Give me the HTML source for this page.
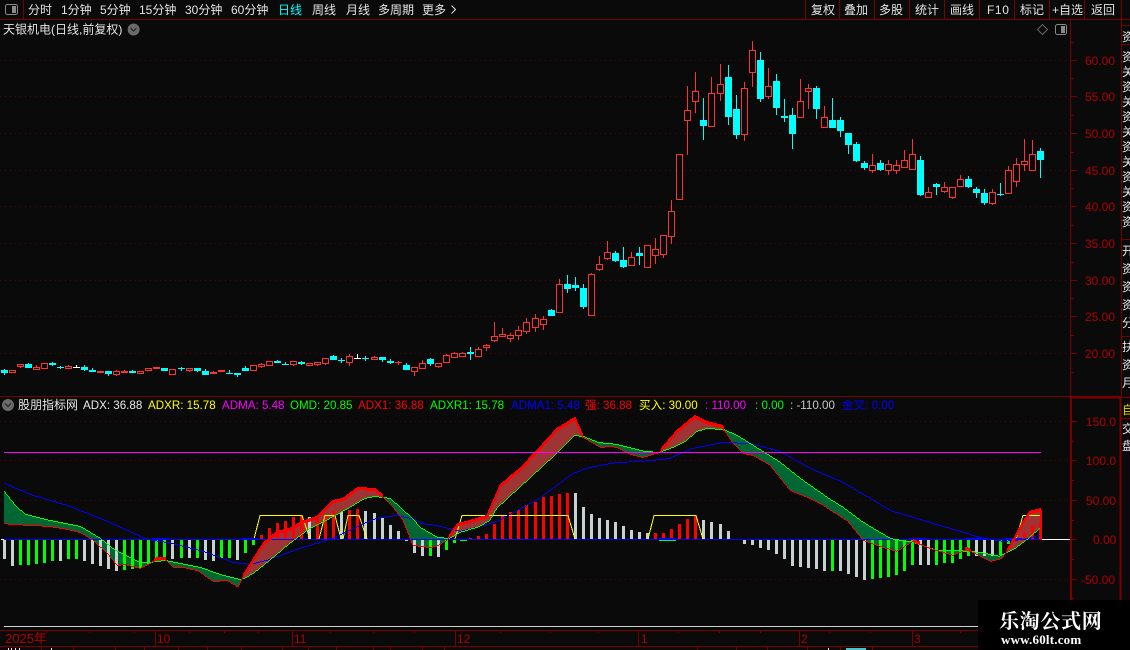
<!DOCTYPE html>
<html><head><meta charset="utf-8"><style>
html,body{margin:0;padding:0;background:#0a0a0a;width:1130px;height:650px;overflow:hidden}
svg{display:block;position:absolute;left:0;top:0}
text{font-family:"Liberation Sans","WenQuanYi Zen Hei","Noto Sans CJK SC",sans-serif;font-size:12px;white-space:pre}
.t text{fill:#e4e4e4}
.ax text{fill:#b00000;letter-spacing:0}
.l text{font-size:11.6px}
</style></head><body>
<svg id="s" width="1130" height="650" viewBox="0 0 1130 650" xmlns="http://www.w3.org/2000/svg">
<rect width="1130" height="650" fill="#0a0a0a"/>
<g id="grid" stroke="#640000" stroke-width="1" stroke-dasharray="1 4" shape-rendering="crispEdges">
<path d="M0 60.5H1070M0 96.5H1070M0 133.5H1070M0 170.5H1070M0 206.5H1070M0 243.5H1070M0 280.5H1070M0 316.5H1070M0 353.5H1070M0 421.5H1070M0 460.5H1070M0 500.5H1070M0 579.5H1070"/>
</g>
<g id="dyn"></g>
<g fill="none" stroke="#7a0000" shape-rendering="crispEdges">
<path d="M0 19.5H1130M23.5 0V19M805.5 0V19M839.5 0V19M874.5 0V19M909.5 0V19M944.5 0V19M979.5 0V19M1014.5 0V19M1049.5 0V19M1084.5 0V19M1121.5 0V396M1070.5 19V396M0 396.5H1121M0 630.5H1121M0 646.5H1121"/>
<path d="M1071 60.5h6M1071 96.5h6M1071 133.5h6M1071 170.5h6M1071 206.5h6M1071 243.5h6M1071 280.5h6M1071 316.5h6M1071 353.5h6M1071 78.5h3M1071 115.5h3M1071 152.5h3M1071 188.5h3M1071 225.5h3M1071 262.5h3M1071 298.5h3M1071 335.5h3M1071 372.5h3M1071 42.5h3"/>
<path d="M1071 421.5h6M1071 460.5h6M1071 500.5h6M1071 539.5h6M1071 579.5h6M1071 441.5h3M1071 480.5h3M1071 520.5h3M1071 559.5h3M1071 598.5h3"/>
<path stroke-width="2" d="M1071 397.5H1120.5V630M1071 397V630"/>
<path d="M155.5 630V646M292.5 630V646M455.5 630V646M638.5 630V646M799.5 630V646M912.5 630V646"/>
<path d="M41.5 646v4M73.5 646v4M115.5 646v4M144.5 646v4M178.5 646v4M207.5 646v4M241.5 646v4M282.5 646v4M308.5 646v4M336.5 646v4M373.5 646v4M390.5 646v4M422.5 646v4M444.5 646v4M697.5 646v4M736.5 646v4M767.5 646v4M807.5 646v4M840.5 646v4M872.5 646v4"/>
<path d="M1121 25.5h9M1121 44.5h9M1121 239.5h9M1121 336.5h9M1121 418.5h9M1121 397.5h9"/>
<path d="M46.5 631v2M89.5 631v2M134.5 631v2M189.5 631v2M224.5 631v2M258.5 631v2M330.5 631v2M373.5 631v2M414.5 631v2M500.5 631v2M550.5 631v2M598.5 631v2M678.5 631v2M719.5 631v2M760.5 631v2M829.5 631v2M870.5 631v2M960.5 631v2M1010.5 631v2"/>
</g>
<rect x="4" y="626" width="1067" height="1" fill="#d0d0d0"/>

<!-- top bar -->
<rect x="5.5" y="4.5" width="12" height="10" rx="2" fill="none" stroke="#8a8a8a"/>
<rect x="12" y="6" width="4" height="7" fill="#8a8a8a"/>
<g class="t">
<text x="28" y="14">分时</text><text x="61" y="14">1分钟</text><text x="100" y="14">5分钟</text><text x="139" y="14">15分钟</text><text x="185" y="14">30分钟</text><text x="231" y="14">60分钟</text>
<text x="278" y="14" style="fill:#00ffff">日线</text><text x="312" y="14">周线</text><text x="346" y="14">月线</text><text x="378" y="14">多周期</text><text x="422" y="14">更多</text>
<text x="811" y="14">复权</text><text x="844" y="14">叠加</text><text x="879" y="14">多股</text><text x="915" y="14">统计</text><text x="950" y="14">画线</text><text x="987" y="14" style="letter-spacing:.6px">F10</text><text x="1020" y="14">标记</text><text x="1052" y="14">+自选</text><text x="1091" y="14">返回</text>
<text x="3" y="33.5">天银机电(日线,前复权)</text>
<text x="18" y="409">股朋指标网</text>
</g>
<path d="M451.5 5.5l4 4-4 4" fill="none" stroke="#e4e4e4"/>
<circle cx="133.6" cy="29.5" r="6" fill="#6a6a6a"/><path d="M130.5 28l3 3 3-3" fill="none" stroke="#222" stroke-width="1.2"/>
<circle cx="8" cy="405" r="6" fill="#6a6a6a"/><path d="M5 403.5l3 3 3-3" fill="none" stroke="#222" stroke-width="1.2"/>
<path d="M1042.5 24.5l5 5-5 5-5-5z" fill="none" stroke="#666"/>
<rect x="1055.5" y="24.5" width="11" height="10" rx="2" fill="none" stroke="#8a8a8a"/><rect x="1061" y="26" width="4" height="7" fill="#8a8a8a"/>

<!-- indicator header -->
<g class="l">
<text x="83" y="409" fill="#e8e8e8">ADX: 36.88</text>
<text x="148" y="409" fill="#ffff00">ADXR: 15.78</text>
<text x="222" y="409" fill="#ff00ff">ADMA: 5.48</text>
<text x="290" y="409" fill="#00ff00">OMD: 20.85</text>
<text x="358" y="409" fill="#ff0000">ADX1: 36.88</text>
<text x="430" y="409" fill="#00ff00">ADXR1: 15.78</text>
<text x="511" y="409" fill="#0000ff">ADMA1: 5.48</text>
<text x="585" y="409" fill="#ff0000">强: 36.88</text>
<text x="639" y="409" fill="#ffff00">买入: 30.00</text>
<text x="705" y="409" fill="#ff00ff">: 110.00</text>
<text x="755" y="409" fill="#00ff00">: 0.00</text>
<text x="790" y="409" fill="#c8c8c8">: -110.00</text>
<text x="842" y="409" fill="#0000ff">金叉: 0.00</text>
</g>

<!-- axis labels -->
<g class="ax">
<text x="1085" y="65">60.00</text><text x="1085" y="101">55.00</text><text x="1085" y="138">50.00</text><text x="1085" y="175">45.00</text><text x="1085" y="211">40.00</text><text x="1085" y="248">35.00</text><text x="1085" y="285">30.00</text><text x="1085" y="321">25.00</text><text x="1085" y="358">20.00</text>
<text x="1086" y="426">150.0</text><text x="1086" y="465">100.0</text><text x="1086" y="505">50.00</text><text x="1093" y="544">0.00</text><text x="1081" y="584">-50.00</text>
<text x="5" y="643" style="font-size:13px">2025年</text><text x="157" y="643">10</text><text x="294" y="643">11</text><text x="457" y="643">12</text><text x="641" y="643">1</text><text x="801" y="643">2</text><text x="914" y="643">3</text>
</g>

<!-- right sidebar clipped characters -->
<clipPath id="c"><rect x="1122" y="20" width="8" height="630"/></clipPath>
<g clip-path="url(#c)" style="font-size:13px">
<text x="1122" y="41" fill="#e8e8e8">资</text><text x="1122" y="61" fill="#e8e8e8">资</text><text x="1122" y="76" fill="#e8e8e8">关</text><text x="1122" y="91" fill="#e8e8e8">资</text><text x="1122" y="106" fill="#e8e8e8">关</text><text x="1122" y="121" fill="#e8e8e8">资</text><text x="1122" y="136" fill="#e8e8e8">关</text><text x="1122" y="151" fill="#e8e8e8">资</text><text x="1122" y="166" fill="#e8e8e8">关</text><text x="1122" y="181" fill="#e8e8e8">资</text><text x="1122" y="196" fill="#e8e8e8">关</text><text x="1122" y="211" fill="#e8e8e8">资</text><text x="1122" y="226" fill="#e8e8e8">资</text>
<text x="1122" y="255" fill="#e8e8e8">开</text><text x="1122" y="273" fill="#e8e8e8">资</text><text x="1122" y="291" fill="#e8e8e8">资</text><text x="1122" y="309" fill="#e8e8e8">资</text><text x="1122" y="327" fill="#e8e8e8">分</text>
<text x="1122" y="351" fill="#e8e8e8">扶</text><text x="1122" y="369" fill="#e8e8e8">资</text><text x="1122" y="387" fill="#e8e8e8">月</text>
<text x="1122" y="414" fill="#d8d800">自</text>
<text x="1122" y="433" fill="#e8e8e8">交</text><text x="1122" y="450" fill="#e8e8e8">盘</text>
</g>
<g fill="#e8e8e8" shape-rendering="crispEdges"><rect x="8" y="648" width="1" height="2"/><rect x="11" y="648" width="1" height="2"/><rect x="15" y="648" width="1" height="2"/><rect x="19" y="648" width="1" height="2"/><rect x="51" y="648" width="1" height="2"/><rect x="828" y="648" width="1" height="2"/></g>
<rect x="846" y="648" width="20" height="2" fill="#40c8c8"/>

<!-- watermark -->
<rect x="978" y="600" width="152" height="50" fill="#000"/>
<text x="999" y="628" fill="#fff" style="font-family:'Noto Serif CJK SC',serif;font-size:20px;font-weight:bold;letter-spacing:.7px">乐淘公式网</text>
<text x="1001" y="644" fill="#fff" style="font-family:'Liberation Serif',serif;font-size:13px;font-weight:bold;letter-spacing:.2px">www.60lt.com</text>
</svg>
<script>
(function(){
var X=function(k){return 4+8*k+(k<22?0:k<46?1:k<66?2:k<89?3:4)};
var C=[[369,370,373,375,'c'],[370,370,373,373,'r'],[364,364,367,368,'r'],[363,364,368,368,'c'],[365,367,370,370,'r'],[363,363,369,369,'r'],[362,363,365,366,'c'],[366,367,368,369,'c'],[365,366,369,369,'r'],[365,367,368,368,'w'],[365,367,370,371,'c'],[368,370,372,372,'c'],[371,371,373,373,'R'],[371,371,374,376,'c'],[370,371,375,376,'r'],[370,371,373,373,'R'],[370,371,373,373,'c'],[371,371,374,374,'r'],[368,368,371,371,'r'],[367,367,369,369,'R'],[368,368,371,371,'c'],[369,369,375,375,'r'],[367,368,369,371,'c'],[368,368,371,372,'r'],[368,368,371,372,'c'],[369,371,375,375,'c'],[371,372,374,374,'R'],[370,370,372,372,'R'],[370,373,374,374,'c'],[373,373,375,377,'c'],[366,368,371,371,'c'],
[365,365,371,371,'r'],[363,364,367,368,'r'],[361,361,366,366,'r'],[360,361,363,363,'c'],[362,364,365,365,'c'],[361,361,365,366,'r'],[361,362,364,365,'c'],[363,363,366,366,'r'],[362,362,365,366,'r'],[358,358,364,365,'r'],[355,356,360,360,'c'],[358,360,361,363,'c'],[354,356,363,366,'r'],[354,358,359,359,'w'],[356,358,359,361,'c'],[356,357,360,360,'r'],[357,357,360,362,'c'],[359,361,363,364,'c'],[361,362,363,365,'R'],[363,365,370,370,'c'],[367,367,372,376,'r'],[360,363,369,369,'r'],[358,359,364,366,'c'],[363,363,367,368,'r'],[354,355,363,363,'r'],[352,353,358,358,'r'],[352,353,357,357,'r'],[347,352,354,360,'c'],[347,349,357,357,'r'],[344,345,348,351,'r'],[322,336,341,342,'r'],[328,334,337,337,'r'],
[333,335,339,342,'r'],[326,330,336,340,'r'],[318,322,332,334,'r'],[314,318,328,332,'r'],[316,319,325,330,'r'],[309,310,316,316,'c'],[279,284,313,313,'r'],[275,284,289,293,'c'],[277,285,288,291,'c'],[284,288,307,309,'c'],[273,274,316,316,'r'],[256,264,270,271,'r'],[241,252,259,260,'r'],[251,253,261,262,'c'],[247,260,267,268,'c'],[252,257,266,266,'r'],[247,253,256,265,'c'],[245,245,268,268,'r'],[238,249,256,264,'r'],[235,235,255,258,'r'],[200,211,237,244,'r'],[154,154,200,200,'r'],[86,110,121,155,'r'],[72,91,102,113,'r'],[98,120,126,140,'c'],[77,93,127,127,'r'],[64,84,94,101,'r'],[65,77,117,125,'c'],[95,109,135,139,'c'],[82,88,135,141,'r'],[41,50,73,87,'r'],[52,60,99,102,'c'],
[68,86,97,99,'r'],[74,81,108,115,'c'],[99,116,118,122,'c'],[108,115,134,149,'c'],[79,101,118,118,'r'],[84,88,92,109,'r'],[86,88,109,119,'c'],[106,117,128,128,'r'],[98,120,128,128,'c'],[117,120,131,137,'c'],[133,133,145,154,'c'],[142,144,161,162,'c'],[161,163,168,170,'c'],[154,165,171,173,'r'],[160,163,170,171,'c'],[160,164,171,175,'r'],[160,165,171,174,'r'],[150,160,168,168,'r'],[139,154,170,170,'r'],[156,160,195,196,'c'],[187,192,198,198,'r'],[183,184,187,195,'c'],[182,187,192,193,'r'],[187,187,198,199,'r'],[175,179,187,187,'r'],[176,179,187,188,'c'],[187,189,193,198,'c'],[189,193,203,205,'c'],[189,192,204,205,'r'],[183,194,195,196,'c'],[166,170,194,194,'r'],[158,164,182,187,'r'],[139,161,165,171,'r'],[140,154,171,171,'r'],[148,151,160,178,'c']];
var h='';
function R(x,y,w,hh,f){h+='<rect x="'+x+'" y="'+y+'" width="'+w+'" height="'+hh+'" fill="'+f+'"/>'}
var ru='#ff3232',cy='#00ffff',wh='#ffffff',bg='#0a0a0a';
var g='<g shape-rendering="crispEdges">';
h+=g;
C.forEach(function(c,k){var x=X(k),col=c[4]=='c'?cy:c[4]=='w'?wh:ru;
 R(x,c[0],1,Math.max(1,c[3]-c[0]),col);
 if(c[2]-c[1]<=1&&c[4]!='R'){R(x-3,c[1],7,1,col);return}
 R(x-3,c[1],7,c[2]-c[1],col);
 if(c[4]=='r')R(x-2,c[1]+1,5,Math.max(0,c[2]-c[1]-2),bg);
});
var G=[[4,491],[15,505],[25,514],[50,520],[80,526],[100,538],[115,550],[140,562],[150,562],[165,560],[180,563],[200,567],[220,574],[240,579],[245,578],[255,572],[270,560],[290,543],[310,528],[330,518],[350,507],[365,498],[375,496],[390,498],[400,507],[413,519],[420,527],[437,537],[450,538],[460,532],[480,526],[490,520],[497,508],[555,455],[575,435],[583,436],[598,442],[617,444],[645,451],[660,452],[673,447],[687,440],[697,431],[707,428],[723,429],[737,435],[753,445],[780,462],[800,478],[827,497],[843,507],[860,520],[873,528],[890,538],[913,542],[937,550],[957,550],[980,552],[1000,556],[1017,547],[1030,537],[1041,527]];
var Rd=[[4,523],[12,524],[33,525],[50,526],[67,529],[80,532],[93,540],[107,553],[117,565],[125,564],[140,568],[147,565],[157,559],[165,559],[173,567],[183,567],[197,570],[213,581],[227,580],[238,587],[243,577],[263,545],[277,533],[290,530],[302,523],[317,518],[333,502],[343,500],[358,489],[375,490],[383,497],[393,507],[403,520],[413,545],[430,547],[437,546],[447,540],[458,525],[470,522],[487,517],[500,487],[510,478],[520,470],[537,452],[557,430],[575,419],[583,437],[600,447],[610,446],[617,447],[630,454],[643,457],[660,452],[677,432],[695,417],[707,423],[722,427],[733,443],[743,453],[753,455],[770,465],[790,490],[810,498],[823,505],[843,518],[847,520],[863,540],[883,547],[897,551],[913,541],[930,548],[953,555],[967,549],[990,561],[1002,558],[1010,547],[1023,523],[1030,513],[1041,510]];
var B=[[4,483],[33,495],[67,505],[100,518],[105,520],[147,539],[167,542],[200,550],[233,562],[250,564],[267,560],[300,548],[333,538],[367,522],[377,518],[397,515],[415,519],[420,523],[437,525],[460,531],[480,526],[500,520],[503,518],[540,498],[573,473],[590,467],[617,462],[640,461],[670,458],[693,448],[723,442],[750,443],[780,451],[810,468],[843,482],[890,510],[920,519],[980,537],[1003,541],[1023,539],[1040,535]];
function I(a,x){for(var i=0;i<a.length-1;i++){if(x<=a[i+1][0]){var t=(x-a[i][0])/(a[i+1][0]-a[i][0]);return a[i][1]+t*(a[i+1][1]-a[i][1])}}return a[a.length-1][1]}
for(var x=4;x<=1041;x++){var r=I(Rd,x),gg=I(G,x);var t=Math.round(Math.min(r,gg)),b=Math.round(Math.max(r,gg));if(b>t)R(x,t,1,b-t,r<gg?'#9e3434':'#006633')}
var D={0:559,1:566,2:565,3:565,4:564,5:563,6:561,7:561,8:559,9:559,10:561,11:564,12:566,13:569,14:571,15:570,16:569,17:568,18:564,19:559,20:557,21:559,22:558,23:558,24:558,25:560,26:561,27:558,28:558,29:560,30:553,31:545,32:535,33:528,34:523,35:521,36:517,37:516,38:517,39:519,40:516,41:511,42:512,43:510,44:509,45:511,46:513,47:517,48:525,49:531,50:541,51:553,52:556,53:556,54:557,55:550,56:543,57:539,58:538,59:536,60:534,61:524,62:515,63:512,64:510,65:505,66:502,67:497,68:496,69:494,70:493,71:493,72:507,73:514,74:518,75:520,76:522,77:526,78:530,79:532,80:533,81:533,82:533,83:529,84:524,85:519,86:516,87:520,88:522,89:524,90:531,91:539,92:544,93:545,94:548,95:550,96:554,97:559,98:566,99:567,100:568,101:569,102:571,103:571,104:571,105:574,106:577,107:580,108:579,109:578,110:577,111:575,112:571,113:565,114:565,115:565,116:565,117:563,118:563,119:559,120:556,121:556,122:556,123:556,124:555,125:544,126:542,127:532,128:525,129:522};
var gr=[2,3,4,5,6,8,9,15,16,17,18,19,20,22,24,27,28,30,31,53,55,56,103,108,109,110,111,112,113,116,117,118,119,120,124,125];
var rd=[32,33,34,35,36,37,39,40,41,43,44,58,59,60,61,62,63,64,65,66,67,68,69,70,81,82,83,84,85,86,126,127,128,129];
for(var k=0;k<=129;k++){var y=D[k];if(y==539)continue;var c=gr.indexOf(k)>=0?'#00ff00':rd.indexOf(k)>=0?'#ff0000':'#c6d2d2';var xx=X(k)-1;
 if(y>539)R(xx,540,3,y-540,c);else R(xx,y,3,539-y,c)}
h+='</g><g shape-rendering="crispEdges" fill="none" stroke-width="1">';
h+='<path stroke="#ffff00" d="M254 539L260 515.5H302L310 539M319 539L325 515.5H335L341 539M343 539L348 515.5H359L367 539M455 539L462 515.5H568L575 539M648 539L654 515.5H696L703 539M1016 539L1023 515.5H1041"/>';
h+='</g><g shape-rendering="crispEdges">';
R(4,539,1037,1,'#0000ff');R(1042,539,28,1,'#ffffff');R(1,539,3,1,'#ffffff');
[[152,169],[241,258],[659,676],[909,926],[965,982],[1005,1022]].forEach(function(s){R(s[0],538,s[1]-s[0],1,'#0000ff')});
R(659,540,17,1,'#00ff00');R(460,540,7,1,'#00ff00');
function L(a,col,thick){for(var x=4;x<a[a.length-1][0];x++){var p=I(a,x),q=I(a,x+1),t=Math.round(Math.min(p,q)),b=Math.round(Math.max(p,q));var yy=t,hh=Math.max(1,b-t+(b>t?0:1));if(thick&&thick(x)){yy=t-2;hh=Math.max(3,b-t+3)}R(x,yy,1,hh,col)}}
L(B,'#0000ff');
L(G,'#00ff00');
L(Rd,'#ff0000',function(x){return I(Rd,x)<I(G,x)-.5});
R(1040,510,2,30,'#ff0000');
R(4,452,1037,1,'#ff00ff');
h+='</g>';
document.getElementById('dyn').innerHTML=h;
})();
</script>
</body></html>
